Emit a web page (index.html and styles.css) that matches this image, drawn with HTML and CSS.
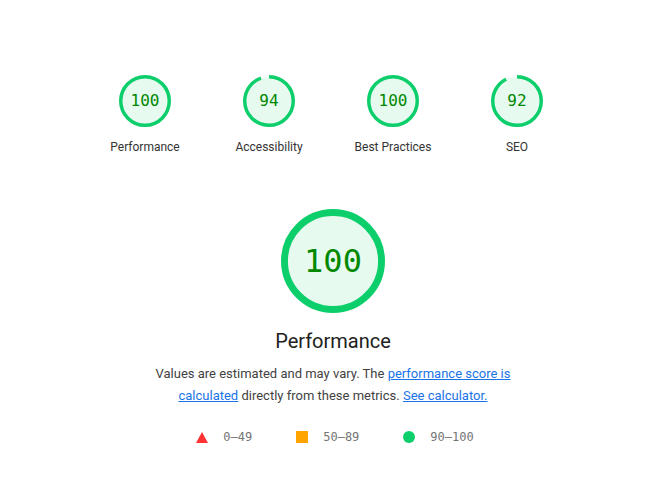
FILE: index.html
```html
<!DOCTYPE html>
<html lang="en">
<head>
    <meta charset="UTF-8">
    <title>Lighthouse Scores</title>
    <link rel="stylesheet" href="styles.css">
</head>
<body>
    <div class="report">
        <div class="gauges">
            <div class="gauge">
                <svg class="arc" viewBox="0 0 120 120">
                    <circle class="base" cx="60" cy="60" r="56"></circle>
                    <circle class="fill" cx="60" cy="60" r="56" stroke-dasharray="351.86 351.86"></circle>
                </svg>
                <span class="score">100</span>
                <div class="label">Performance</div>
            </div>
            <div class="gauge">
                <svg class="arc" viewBox="0 0 120 120">
                    <circle class="base" cx="60" cy="60" r="56"></circle>
                    <circle class="fill" cx="60" cy="60" r="56" stroke-dasharray="330.75 351.86"></circle>
                </svg>
                <span class="score">94</span>
                <div class="label">Accessibility</div>
            </div>
            <div class="gauge">
                <svg class="arc" viewBox="0 0 120 120">
                    <circle class="base" cx="60" cy="60" r="56"></circle>
                    <circle class="fill" cx="60" cy="60" r="56" stroke-dasharray="351.86 351.86"></circle>
                </svg>
                <span class="score">100</span>
                <div class="label">Best Practices</div>
            </div>
            <div class="gauge">
                <svg class="arc" viewBox="0 0 120 120">
                    <circle class="base" cx="60" cy="60" r="56"></circle>
                    <circle class="fill" cx="60" cy="60" r="56" stroke-dasharray="323.71 351.86"></circle>
                </svg>
                <span class="score">92</span>
                <div class="label">SEO</div>
            </div>
        </div>

        <div class="main">
            <div class="gauge big">
                <svg class="arc" viewBox="0 0 120 120">
                    <circle class="base" cx="60" cy="60" r="56"></circle>
                    <circle class="fill" cx="60" cy="60" r="56" stroke-dasharray="351.86 351.86"></circle>
                </svg>
                <span class="score">100</span>
            </div>
            <h2>Performance</h2>
            <p class="desc">Values are estimated and may vary. The <a href="#">performance score is</a><br><a href="#">calculated</a> directly from these metrics. <a href="#">See calculator.</a></p>
            <div class="legend">
                <span class="item"><span class="tri"></span>0–49</span>
                <span class="item"><span class="sq"></span>50–89</span>
                <span class="item"><span class="dot"></span>90–100</span>
            </div>
        </div>
    </div>
</body>
</html>
```

FILE: styles.css
```css
body {
    margin: 0;
    background: #fff;
    font-family: Roboto, "Liberation Sans", sans-serif;
    color: #212121;
}
.report {
    width: 650px;
    padding: 75px 0 0 12px;
    box-sizing: border-box;
}
.gauges {
    display: flex;
    justify-content: center;
}
.gauge {
    width: 124px;
    display: flex;
    flex-direction: column;
    align-items: center;
    position: relative;
}
.arc {
    width: 52px;
    height: 52px;
    transform: rotate(-90deg);
}
.base {
    fill: rgba(12, 206, 107, 0.1);
    stroke: none;
}
.fill {
    fill: none;
    stroke: #0cce6b;
    stroke-width: 8;
}
.score {
    position: absolute;
    top: 0;
    left: 0;
    right: 0;
    height: 52px;
    line-height: 52px;
    text-align: center;
    font-family: "DejaVu Sans Mono", "Liberation Mono", monospace;
    font-size: 16px;
    color: #008800;
}
.label {
    margin-top: 13px;
    font-size: 12px;
    color: #333;
}
.main {
    display: flex;
    flex-direction: column;
    align-items: center;
    margin-top: 55px;
    padding-left: 4px;
}
.gauge.big {
    width: 104px;
}
.big .arc {
    width: 104px;
    height: 104px;
}
.big .score {
    height: 104px;
    line-height: 104px;
    font-size: 32px;
}
h2 {
    margin: 16px 0 0;
    font-size: 20px;
    font-weight: 400;
    color: #212121;
}
.desc {
    width: 380px;
    margin: 10px 0 0;
    text-align: center;
    font-size: 13px;
    line-height: 22px;
    color: #424242;
}
.desc a {
    color: #1a73e8;
}
.legend {
    display: flex;
    gap: 44px;
    margin-top: 23px;
    padding-left: 4px;
    font-family: "DejaVu Sans Mono", "Liberation Mono", monospace;
    font-size: 12px;
    color: #757575;
}
.item {
    display: flex;
    align-items: center;
    gap: 15px;
}
.tri {
    width: 0;
    height: 0;
    border-left: 6px solid transparent;
    border-right: 6px solid transparent;
    border-bottom: 11px solid #ff3333;
}
.sq {
    width: 12px;
    height: 12px;
    background: #ffa400;
}
.dot {
    width: 12px;
    height: 12px;
    border-radius: 50%;
    background: #0cce6b;
}
```
